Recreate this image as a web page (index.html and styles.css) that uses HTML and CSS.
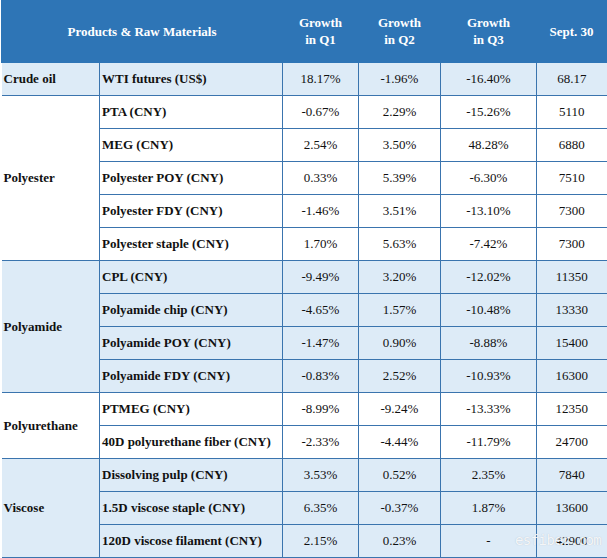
FILE: index.html
```html
<!DOCTYPE html>
<html>
<head>
<meta charset="utf-8">
<link rel="stylesheet" href="styles.css">
</head>
<body>
<div class="wrap">
<table class="grid">
  <colgroup>
    <col class="c1"><col class="c2"><col class="c3"><col class="c4"><col class="c5"><col class="c6">
  </colgroup>
  <thead>
    <tr class="head">
      <th colspan="2">Products &amp; Raw Materials</th>
      <th>Growth<br>in Q1</th>
      <th>Growth<br>in Q2</th>
      <th>Growth<br>in Q3</th>
      <th>Sept. 30</th>
    </tr>
  </thead>
  <tbody class="blue">
    <tr><td class="cat">Crude oil</td><td class="item">WTI futures (US$)</td><td>18.17%</td><td>-1.96%</td><td>-16.40%</td><td>68.17</td></tr>
  </tbody>
  <tbody>
    <tr><td class="cat" rowspan="5">Polyester</td><td class="item">PTA (CNY)</td><td>-0.67%</td><td>2.29%</td><td>-15.26%</td><td>5110</td></tr>
    <tr><td class="item">MEG (CNY)</td><td>2.54%</td><td>3.50%</td><td>48.28%</td><td>6880</td></tr>
    <tr><td class="item">Polyester POY (CNY)</td><td>0.33%</td><td>5.39%</td><td>-6.30%</td><td>7510</td></tr>
    <tr><td class="item">Polyester FDY (CNY)</td><td>-1.46%</td><td>3.51%</td><td>-13.10%</td><td>7300</td></tr>
    <tr><td class="item">Polyester staple (CNY)</td><td>1.70%</td><td>5.63%</td><td>-7.42%</td><td>7300</td></tr>
  </tbody>
  <tbody class="blue">
    <tr><td class="cat" rowspan="4">Polyamide</td><td class="item">CPL (CNY)</td><td>-9.49%</td><td>3.20%</td><td>-12.02%</td><td>11350</td></tr>
    <tr><td class="item">Polyamide chip (CNY)</td><td>-4.65%</td><td>1.57%</td><td>-10.48%</td><td>13330</td></tr>
    <tr><td class="item">Polyamide POY (CNY)</td><td>-1.47%</td><td>0.90%</td><td>-8.88%</td><td>15400</td></tr>
    <tr><td class="item">Polyamide FDY (CNY)</td><td>-0.83%</td><td>2.52%</td><td>-10.93%</td><td>16300</td></tr>
  </tbody>
  <tbody>
    <tr><td class="cat" rowspan="2">Polyurethane</td><td class="item">PTMEG (CNY)</td><td>-8.99%</td><td>-9.24%</td><td>-13.33%</td><td>12350</td></tr>
    <tr><td class="item">40D polyurethane fiber (CNY)</td><td>-2.33%</td><td>-4.44%</td><td>-11.79%</td><td>24700</td></tr>
  </tbody>
  <tbody class="blue">
    <tr><td class="cat" rowspan="3">Viscose</td><td class="item">Dissolving pulp (CNY)</td><td>3.53%</td><td>0.52%</td><td>2.35%</td><td>7840</td></tr>
    <tr><td class="item">1.5D viscose staple (CNY)</td><td>6.35%</td><td>-0.37%</td><td>1.87%</td><td>13600</td></tr>
    <tr><td class="item">120D viscose filament (CNY)</td><td>2.15%</td><td>0.23%</td><td>-</td><td>42900</td></tr>
  </tbody>
</table>
<div class="mark">esfiber.com</div>
</div>
</body>
</html>
```
FILE: styles.css
```css
html, body {
  margin: 0;
  padding: 0;
  background: #ffffff;
}
.wrap {
  position: relative;
  width: 606px;
  box-sizing: border-box;
  padding-left: 1px;
}
.grid {
  border-collapse: collapse;
  table-layout: fixed;
  width: 605px;
  font-family: "Liberation Serif", "Times New Roman", serif;
  font-size: 13px;
  color: #111;
}
.c1 { width: 98px; }
.c2 { width: 183px; }
.c3 { width: 76px; }
.c4 { width: 82px; }
.c5 { width: 96px; }
.c6 { width: 70px; }
.head th {
  background: #2e75b6;
  color: #ffffff;
  font-weight: bold;
  height: 62px;
  padding: 0;
  line-height: 17px;
  border: 1px solid #2e75b6;
  border-top: none;
}
.grid td {
  height: 32px;
  padding: 0;
  text-align: center;
  border: 1px solid #3a74ae;
  line-height: 16px;
}
.grid td.cat, .grid td.item {
  text-align: left;
  font-weight: bold;
  padding-left: 2px;
}
.grid td.cat { border-left: none; }
.grid tbody tr td:last-child { border-right: none; }
.blue td { background: #ddebf7; }
.mark {
  position: absolute;
  left: 515px;
  top: 532px;
  font-family: "DejaVu Sans Mono", monospace;
  font-size: 14px;
  letter-spacing: -0.6px;
  color: rgba(255, 255, 255, 0.85);
  text-shadow: 0 0 1px rgba(150, 160, 175, 0.6);
  white-space: nowrap;
}
```
